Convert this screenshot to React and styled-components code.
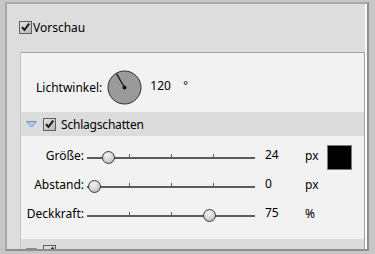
import React from "react";
import styled, { createGlobalStyle } from "styled-components";

const GlobalStyle = createGlobalStyle`
  html, body {
    margin: 0;
    padding: 0;
    background: #c6c6c6;
  }
  body {
    font-family: "Noto Sans", "Open Sans", Arial, sans-serif;
    font-size: 12px;
    color: #000;
  }
`;

const Page = styled.div`
  width: 375px;
  height: 254px;
  box-sizing: border-box;
  padding: 2px 6px 3px 5px;
  display: flex;
`;

const Frame = styled.div`
  flex: 1;
  display: flex;
  flex-direction: column;
  background: #dddddd;
  border-top: 2px solid #a8a8a8;
  border-left: 2px solid #a8a8a8;
  border-right: 2px solid #8e8e8e;
  border-bottom: 2px solid #8e8e8e;
  box-shadow: inset -2px 0 0 #fafafa;
  overflow: hidden;
`;

const TopRow = styled.div`
  flex: none;
  display: flex;
  align-items: center;
  gap: 1px;
  padding: 14px 0 0 12px;
  height: 32px;
  box-sizing: border-box;
  line-height: 13px;
`;

const Panel = styled.div`
  flex: none;
  margin: 16px 2px 0 13px;
  background: #f2f2f2;
  border-top: 1px solid #a2a2a2;
  border-left: 1px solid #c4c4c4;
  border-right: 1px solid #a2a2a2;
  display: flex;
  flex-direction: column;
`;

const AngleRow = styled.div`
  flex: none;
  height: 59px;
  display: flex;
  align-items: center;
  padding: 10px 0 0 15px;
  box-sizing: border-box;
`;

const Label = styled.span`
  white-space: nowrap;
`;

const Dial = styled.svg`
  margin-left: 5px;
  flex: none;
`;

const AngleValue = styled.span`
  margin-left: 8px;
  width: 33px;
  margin-top: -4px;
`;

const Degree = styled.span`
  margin-top: -6px;
  font-size: 11px;
`;

const SectionBar = styled.div`
  flex: none;
  height: 24px;
  background: #dcdcdc;
  display: flex;
  align-items: flex-start;
  padding: 6px 0 0 5px;
  box-sizing: border-box;
  gap: 6px;
`;

const BarTitle = styled.span`
  line-height: 13px;
  margin-left: -1px;
  letter-spacing: -0.2px;
`;

const Sliders = styled.div`
  flex: none;
  display: flex;
  flex-direction: column;
  padding: 6px 0 10px;
`;

const SliderRow = styled.div`
  display: grid;
  grid-template-columns: 66px 178px 40px 22px 25px;
  align-items: center;
  height: 29px;
`;

const RowLabel = styled.span`
  text-align: right;
  padding-right: 3px;
  white-space: nowrap;
  margin-top: -2px;
`;

const TrackWrap = styled.div`
  position: relative;
  width: 168px;
  height: 14px;
`;

const TrackLine = styled.div`
  position: absolute;
  left: 0;
  right: 0;
  top: 7px;
  height: 2px;
  background: #5c5c5c;
`;

const Tick = styled.div`
  position: absolute;
  top: 4px;
  width: 1px;
  height: 3px;
  background: #5c5c5c;
`;

const Thumb = styled.div`
  position: absolute;
  top: 1px;
  width: 13px;
  height: 13px;
  margin-left: -6.5px;
  border-radius: 50%;
  box-sizing: border-box;
  border: 1px solid #3c3c3c;
  background: radial-gradient(circle at 40% 30%, #f4f4f4 0%, #d2d2d2 55%, #a8a8a8 100%);
`;

const Value = styled.span`
  margin-top: -4px;
`;

const Unit = styled.span`
  margin-top: -2px;
`;

const Swatch = styled.div`
  width: 25px;
  height: 25px;
  box-sizing: border-box;
  border: 1px solid #7a7a7a;
  background: #000;
  margin-top: 2px;
`;

const CheckBox = () => (
  <svg width="13" height="13" viewBox="0 0 13 13" style={{ flex: "none" }}>
    <defs>
      <linearGradient id="cbg" x1="0" y1="0" x2="1" y2="1">
        <stop offset="0" stopColor="#e6e6e6" />
        <stop offset="1" stopColor="#b4b4b4" />
      </linearGradient>
    </defs>
    <rect x="0.5" y="0.5" width="12" height="12" fill="url(#cbg)" stroke="#5e5e5e" />
    <path d="M3 6.2 L5.4 9 L10.2 2.6" fill="none" stroke="#1a1a1a" strokeWidth="2" />
  </svg>
);

const Triangle = () => (
  <svg width="11" height="7" viewBox="0 0 11 7" style={{ marginTop: 3, flex: "none" }}>
    <path d="M0.5 0.5 L10.5 0.5 L5.5 6 Z" fill="#b3c8ea" stroke="#6f8dc4" />
  </svg>
);

const Slider = ({ value, max }) => {
  const left = 7 + (value / max) * (168 - 14);
  return (
    <TrackWrap>
      <TrackLine />
      <Tick style={{ left: 42 }} />
      <Tick style={{ left: 84 }} />
      <Tick style={{ left: 126 }} />
      <Thumb style={{ left }} />
    </TrackWrap>
  );
};

const rows = [
  { label: "Größe:", value: 24, max: 250, unit: "px", swatch: true },
  { label: "Abstand:", value: 0, max: 100, unit: "px" },
  { label: "Deckkraft:", value: 75, max: 100, unit: "%" },
];

export default function App() {
  const angle = 120;
  const rad = (angle * Math.PI) / 180;
  const cx = 17.5;
  const cy = 17.5;
  const ex = cx + Math.cos(rad) * 16;
  const ey = cy - Math.sin(rad) * 16;

  return (
    <>
      <GlobalStyle />
      <Page>
        <Frame>
          <TopRow>
            <CheckBox />
            <Label>Vorschau</Label>
          </TopRow>
          <Panel>
            <AngleRow>
              <Label>Lichtwinkel:</Label>
              <Dial width="35" height="35" viewBox="0 0 35 35">
                <circle cx={cx} cy={cy} r="16.5" fill="#9a9a9a" stroke="#2e2e2e" strokeWidth="1" />
                <line x1={cx} y1={cy} x2={ex} y2={ey} stroke="#111" strokeWidth="1.2" />
                <circle cx={cx} cy={cy} r="2" fill="#111" />
              </Dial>
              <AngleValue>120</AngleValue>
              <Degree>°</Degree>
            </AngleRow>
            <SectionBar>
              <Triangle />
              <CheckBox />
              <BarTitle>Schlagschatten</BarTitle>
            </SectionBar>
            <Sliders>
              {rows.map((r) => (
                <SliderRow key={r.label}>
                  <RowLabel>{r.label}</RowLabel>
                  <Slider value={r.value} max={r.max} />
                  <Value>{r.value}</Value>
                  <Unit>{r.unit}</Unit>
                  {r.swatch ? <Swatch /> : <span />}
                </SliderRow>
              ))}
            </Sliders>
            <SectionBar>
              <Triangle />
              <CheckBox />
            </SectionBar>
          </Panel>
        </Frame>
      </Page>
    </>
  );
}
